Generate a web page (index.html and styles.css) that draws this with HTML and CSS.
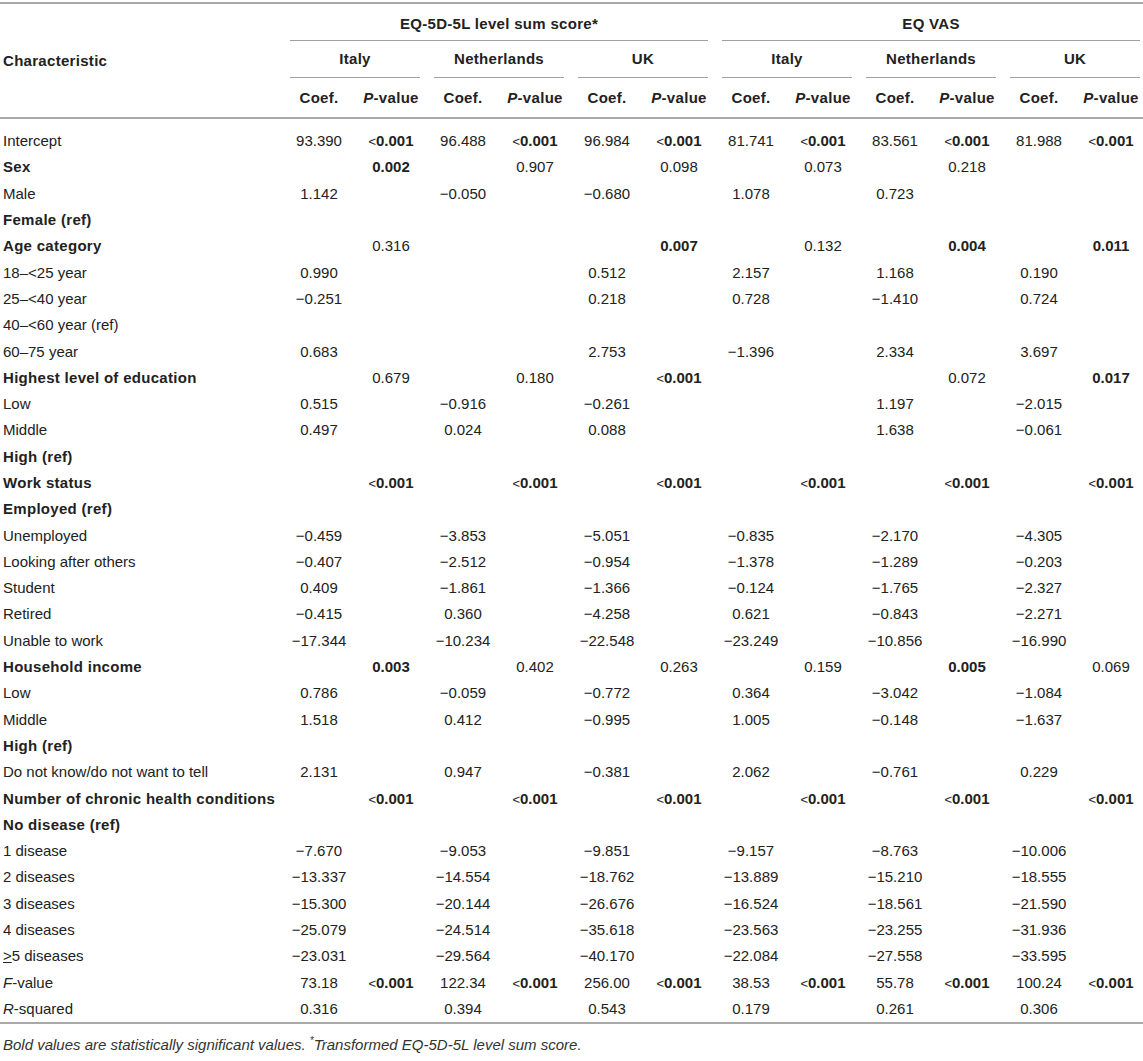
FILE: index.html
```html
<!DOCTYPE html>
<html>

<head>
	<title>Regression results</title>

	<link rel="stylesheet" href="styles.css">
</head>

<body>

	<div class="table-wrap">
	<table class="results">
		<colgroup>
			<col class="col-label">
			<col span="12" class="col-num">
		</colgroup>
		<thead>
			<tr class="row-group">
				<th class="label-head" rowspan="3">Characteristic</th>
				<th class="span-head" colspan="6"><div class="rule">EQ-5D-5L level sum score*</div></th>
				<th class="span-head" colspan="6"><div class="rule">EQ VAS</div></th>
			</tr>
			<tr class="row-country">
				<th class="span-head" colspan="2"><div class="rule">Italy</div></th>
				<th class="span-head" colspan="2"><div class="rule">Netherlands</div></th>
				<th class="span-head" colspan="2"><div class="rule">UK</div></th>
				<th class="span-head" colspan="2"><div class="rule">Italy</div></th>
				<th class="span-head" colspan="2"><div class="rule">Netherlands</div></th>
				<th class="span-head" colspan="2"><div class="rule">UK</div></th>
			</tr>
			<tr class="row-sub">
				<th>Coef.</th><th class="p"><i>P</i>-value</th>
				<th>Coef.</th><th class="p"><i>P</i>-value</th>
				<th>Coef.</th><th class="p"><i>P</i>-value</th>
				<th>Coef.</th><th class="p"><i>P</i>-value</th>
				<th>Coef.</th><th class="p"><i>P</i>-value</th>
				<th>Coef.</th><th class="p"><i>P</i>-value</th>
			</tr>
		</thead>
		<tbody>
			<tr>
				<td class="label">Intercept</td>
				<td>93.390</td><td class="p"><span class="lt">&lt;</span><b>0.001</b></td>
				<td>96.488</td><td class="p"><span class="lt">&lt;</span><b>0.001</b></td>
				<td>96.984</td><td class="p"><span class="lt">&lt;</span><b>0.001</b></td>
				<td>81.741</td><td class="p"><span class="lt">&lt;</span><b>0.001</b></td>
				<td>83.561</td><td class="p"><span class="lt">&lt;</span><b>0.001</b></td>
				<td>81.988</td><td class="p"><span class="lt">&lt;</span><b>0.001</b></td>
			</tr>
			<tr class="heading">
				<td class="label">Sex</td>
				<td></td><td class="p"><b>0.002</b></td>
				<td></td><td class="p">0.907</td>
				<td></td><td class="p">0.098</td>
				<td></td><td class="p">0.073</td>
				<td></td><td class="p">0.218</td>
				<td></td><td class="p"></td>
			</tr>
			<tr>
				<td class="label">Male</td>
				<td>1.142</td><td class="p"></td>
				<td>&minus;0.050</td><td class="p"></td>
				<td>&minus;0.680</td><td class="p"></td>
				<td>1.078</td><td class="p"></td>
				<td>0.723</td><td class="p"></td>
				<td></td><td class="p"></td>
			</tr>
			<tr class="heading">
				<td class="label">Female (ref)</td>
				<td></td><td></td><td></td><td></td><td></td><td></td>
				<td></td><td></td><td></td><td></td><td></td><td></td>
			</tr>
			<tr class="heading">
				<td class="label">Age category</td>
				<td></td><td class="p">0.316</td>
				<td></td><td class="p"></td>
				<td></td><td class="p"><b>0.007</b></td>
				<td></td><td class="p">0.132</td>
				<td></td><td class="p"><b>0.004</b></td>
				<td></td><td class="p"><b>0.011</b></td>
			</tr>
			<tr>
				<td class="label">18&ndash;&lt;25 year</td>
				<td>0.990</td><td class="p"></td>
				<td></td><td class="p"></td>
				<td>0.512</td><td class="p"></td>
				<td>2.157</td><td class="p"></td>
				<td>1.168</td><td class="p"></td>
				<td>0.190</td><td class="p"></td>
			</tr>
			<tr>
				<td class="label">25&ndash;&lt;40 year</td>
				<td>&minus;0.251</td><td class="p"></td>
				<td></td><td class="p"></td>
				<td>0.218</td><td class="p"></td>
				<td>0.728</td><td class="p"></td>
				<td>&minus;1.410</td><td class="p"></td>
				<td>0.724</td><td class="p"></td>
			</tr>
			<tr>
				<td class="label">40&ndash;&lt;60 year (ref)</td>
				<td></td><td></td><td></td><td></td><td></td><td></td>
				<td></td><td></td><td></td><td></td><td></td><td></td>
			</tr>
			<tr>
				<td class="label">60&ndash;75 year</td>
				<td>0.683</td><td class="p"></td>
				<td></td><td class="p"></td>
				<td>2.753</td><td class="p"></td>
				<td>&minus;1.396</td><td class="p"></td>
				<td>2.334</td><td class="p"></td>
				<td>3.697</td><td class="p"></td>
			</tr>
			<tr class="heading">
				<td class="label">Highest level of education</td>
				<td></td><td class="p">0.679</td>
				<td></td><td class="p">0.180</td>
				<td></td><td class="p"><span class="lt">&lt;</span><b>0.001</b></td>
				<td></td><td class="p"></td>
				<td></td><td class="p">0.072</td>
				<td></td><td class="p"><b>0.017</b></td>
			</tr>
			<tr>
				<td class="label">Low</td>
				<td>0.515</td><td class="p"></td>
				<td>&minus;0.916</td><td class="p"></td>
				<td>&minus;0.261</td><td class="p"></td>
				<td></td><td class="p"></td>
				<td>1.197</td><td class="p"></td>
				<td>&minus;2.015</td><td class="p"></td>
			</tr>
			<tr>
				<td class="label">Middle</td>
				<td>0.497</td><td class="p"></td>
				<td>0.024</td><td class="p"></td>
				<td>0.088</td><td class="p"></td>
				<td></td><td class="p"></td>
				<td>1.638</td><td class="p"></td>
				<td>&minus;0.061</td><td class="p"></td>
			</tr>
			<tr class="heading">
				<td class="label">High (ref)</td>
				<td></td><td></td><td></td><td></td><td></td><td></td>
				<td></td><td></td><td></td><td></td><td></td><td></td>
			</tr>
			<tr class="heading">
				<td class="label">Work status</td>
				<td></td><td class="p"><span class="lt">&lt;</span><b>0.001</b></td>
				<td></td><td class="p"><span class="lt">&lt;</span><b>0.001</b></td>
				<td></td><td class="p"><span class="lt">&lt;</span><b>0.001</b></td>
				<td></td><td class="p"><span class="lt">&lt;</span><b>0.001</b></td>
				<td></td><td class="p"><span class="lt">&lt;</span><b>0.001</b></td>
				<td></td><td class="p"><span class="lt">&lt;</span><b>0.001</b></td>
			</tr>
			<tr class="heading">
				<td class="label">Employed (ref)</td>
				<td></td><td></td><td></td><td></td><td></td><td></td>
				<td></td><td></td><td></td><td></td><td></td><td></td>
			</tr>
			<tr>
				<td class="label">Unemployed</td>
				<td>&minus;0.459</td><td class="p"></td>
				<td>&minus;3.853</td><td class="p"></td>
				<td>&minus;5.051</td><td class="p"></td>
				<td>&minus;0.835</td><td class="p"></td>
				<td>&minus;2.170</td><td class="p"></td>
				<td>&minus;4.305</td><td class="p"></td>
			</tr>
			<tr>
				<td class="label">Looking after others</td>
				<td>&minus;0.407</td><td class="p"></td>
				<td>&minus;2.512</td><td class="p"></td>
				<td>&minus;0.954</td><td class="p"></td>
				<td>&minus;1.378</td><td class="p"></td>
				<td>&minus;1.289</td><td class="p"></td>
				<td>&minus;0.203</td><td class="p"></td>
			</tr>
			<tr>
				<td class="label">Student</td>
				<td>0.409</td><td class="p"></td>
				<td>&minus;1.861</td><td class="p"></td>
				<td>&minus;1.366</td><td class="p"></td>
				<td>&minus;0.124</td><td class="p"></td>
				<td>&minus;1.765</td><td class="p"></td>
				<td>&minus;2.327</td><td class="p"></td>
			</tr>
			<tr>
				<td class="label">Retired</td>
				<td>&minus;0.415</td><td class="p"></td>
				<td>0.360</td><td class="p"></td>
				<td>&minus;4.258</td><td class="p"></td>
				<td>0.621</td><td class="p"></td>
				<td>&minus;0.843</td><td class="p"></td>
				<td>&minus;2.271</td><td class="p"></td>
			</tr>
			<tr>
				<td class="label">Unable to work</td>
				<td>&minus;17.344</td><td class="p"></td>
				<td>&minus;10.234</td><td class="p"></td>
				<td>&minus;22.548</td><td class="p"></td>
				<td>&minus;23.249</td><td class="p"></td>
				<td>&minus;10.856</td><td class="p"></td>
				<td>&minus;16.990</td><td class="p"></td>
			</tr>
			<tr class="heading">
				<td class="label">Household income</td>
				<td></td><td class="p"><b>0.003</b></td>
				<td></td><td class="p">0.402</td>
				<td></td><td class="p">0.263</td>
				<td></td><td class="p">0.159</td>
				<td></td><td class="p"><b>0.005</b></td>
				<td></td><td class="p">0.069</td>
			</tr>
			<tr>
				<td class="label">Low</td>
				<td>0.786</td><td class="p"></td>
				<td>&minus;0.059</td><td class="p"></td>
				<td>&minus;0.772</td><td class="p"></td>
				<td>0.364</td><td class="p"></td>
				<td>&minus;3.042</td><td class="p"></td>
				<td>&minus;1.084</td><td class="p"></td>
			</tr>
			<tr>
				<td class="label">Middle</td>
				<td>1.518</td><td class="p"></td>
				<td>0.412</td><td class="p"></td>
				<td>&minus;0.995</td><td class="p"></td>
				<td>1.005</td><td class="p"></td>
				<td>&minus;0.148</td><td class="p"></td>
				<td>&minus;1.637</td><td class="p"></td>
			</tr>
			<tr class="heading">
				<td class="label">High (ref)</td>
				<td></td><td></td><td></td><td></td><td></td><td></td>
				<td></td><td></td><td></td><td></td><td></td><td></td>
			</tr>
			<tr>
				<td class="label">Do not know/do not want to tell</td>
				<td>2.131</td><td class="p"></td>
				<td>0.947</td><td class="p"></td>
				<td>&minus;0.381</td><td class="p"></td>
				<td>2.062</td><td class="p"></td>
				<td>&minus;0.761</td><td class="p"></td>
				<td>0.229</td><td class="p"></td>
			</tr>
			<tr class="heading">
				<td class="label">Number of chronic health conditions</td>
				<td></td><td class="p"><span class="lt">&lt;</span><b>0.001</b></td>
				<td></td><td class="p"><span class="lt">&lt;</span><b>0.001</b></td>
				<td></td><td class="p"><span class="lt">&lt;</span><b>0.001</b></td>
				<td></td><td class="p"><span class="lt">&lt;</span><b>0.001</b></td>
				<td></td><td class="p"><span class="lt">&lt;</span><b>0.001</b></td>
				<td></td><td class="p"><span class="lt">&lt;</span><b>0.001</b></td>
			</tr>
			<tr class="heading">
				<td class="label">No disease (ref)</td>
				<td></td><td></td><td></td><td></td><td></td><td></td>
				<td></td><td></td><td></td><td></td><td></td><td></td>
			</tr>
			<tr>
				<td class="label">1 disease</td>
				<td>&minus;7.670</td><td class="p"></td>
				<td>&minus;9.053</td><td class="p"></td>
				<td>&minus;9.851</td><td class="p"></td>
				<td>&minus;9.157</td><td class="p"></td>
				<td>&minus;8.763</td><td class="p"></td>
				<td>&minus;10.006</td><td class="p"></td>
			</tr>
			<tr>
				<td class="label">2 diseases</td>
				<td>&minus;13.337</td><td class="p"></td>
				<td>&minus;14.554</td><td class="p"></td>
				<td>&minus;18.762</td><td class="p"></td>
				<td>&minus;13.889</td><td class="p"></td>
				<td>&minus;15.210</td><td class="p"></td>
				<td>&minus;18.555</td><td class="p"></td>
			</tr>
			<tr>
				<td class="label">3 diseases</td>
				<td>&minus;15.300</td><td class="p"></td>
				<td>&minus;20.144</td><td class="p"></td>
				<td>&minus;26.676</td><td class="p"></td>
				<td>&minus;16.524</td><td class="p"></td>
				<td>&minus;18.561</td><td class="p"></td>
				<td>&minus;21.590</td><td class="p"></td>
			</tr>
			<tr>
				<td class="label">4 diseases</td>
				<td>&minus;25.079</td><td class="p"></td>
				<td>&minus;24.514</td><td class="p"></td>
				<td>&minus;35.618</td><td class="p"></td>
				<td>&minus;23.563</td><td class="p"></td>
				<td>&minus;23.255</td><td class="p"></td>
				<td>&minus;31.936</td><td class="p"></td>
			</tr>
			<tr>
				<td class="label"><span class="ge">&gt;</span>5 diseases</td>
				<td>&minus;23.031</td><td class="p"></td>
				<td>&minus;29.564</td><td class="p"></td>
				<td>&minus;40.170</td><td class="p"></td>
				<td>&minus;22.084</td><td class="p"></td>
				<td>&minus;27.558</td><td class="p"></td>
				<td>&minus;33.595</td><td class="p"></td>
			</tr>
			<tr>
				<td class="label"><i>F</i>-value</td>
				<td>73.18</td><td class="p"><span class="lt">&lt;</span><b>0.001</b></td>
				<td>122.34</td><td class="p"><span class="lt">&lt;</span><b>0.001</b></td>
				<td>256.00</td><td class="p"><span class="lt">&lt;</span><b>0.001</b></td>
				<td>38.53</td><td class="p"><span class="lt">&lt;</span><b>0.001</b></td>
				<td>55.78</td><td class="p"><span class="lt">&lt;</span><b>0.001</b></td>
				<td>100.24</td><td class="p"><span class="lt">&lt;</span><b>0.001</b></td>
			</tr>
			<tr>
				<td class="label"><i>R</i>-squared</td>
				<td>0.316</td><td class="p"></td>
				<td>0.394</td><td class="p"></td>
				<td>0.543</td><td class="p"></td>
				<td>0.179</td><td class="p"></td>
				<td>0.261</td><td class="p"></td>
				<td>0.306</td><td class="p"></td>
			</tr>
		</tbody>
	</table>
	</div>

	<p class="note">Bold values are statistically significant values. <sup>*</sup>Transformed EQ-5D-5L level sum score.</p>

</body>

</html>
```

FILE: styles.css
```css
body {
	margin: 0px;
	background: white;
	color: #222;
	font-family: "Liberation Sans", Arial, sans-serif;
}

.table-wrap {
	overflow: hidden;
}

.results {
	width: 1147px;
	margin-top: 2px;
	table-layout: fixed;
	border-collapse: separate;
	border-spacing: 0;
	border-top: 2px solid #a9a9a9;
	border-bottom: 2px solid #a9a9a9;
	font-size: 15px;
}

.col-label {
	width: 283px;
}

.col-num {
	width: 72px;
}

.results th {
	padding: 0;
	font-weight: bold;
	letter-spacing: 0.3px;
	text-align: center;
}

.label-head {
	text-align: left !important;
	padding-left: 3px !important;
	vertical-align: middle;
	border-bottom: 2px solid #a9a9a9;
}

.span-head {
	padding: 0 7px !important;
}

.span-head .rule {
	border-bottom: 1px solid #a0a0a0;
}

.row-group .rule {
	padding-top: 4px;
	line-height: 32px;
}

.row-country .rule {
	line-height: 36px;
}

.row-sub th {
	line-height: 39px;
	border-bottom: 2px solid #a9a9a9;
}

.results td {
	padding: 0;
	height: 26.3px;
	line-height: 18px;
	text-align: center;
	white-space: nowrap;
}

.results td.label {
	text-align: left;
	padding-left: 3px;
}

.results tbody tr:first-child td {
	padding-top: 9px;
}

.heading td.label {
	font-weight: bold;
	letter-spacing: 0.3px;
}

.lt {
	font-size: 13px;
	line-height: 1;
}

.ge {
	text-decoration: underline;
}

.note {
	margin: 12px 0 0 3px;
	font-size: 15px;
	line-height: 18px;
	font-style: italic;
	color: #333;
}

.note sup {
	font-size: 10px;
	line-height: 0;
}
```
